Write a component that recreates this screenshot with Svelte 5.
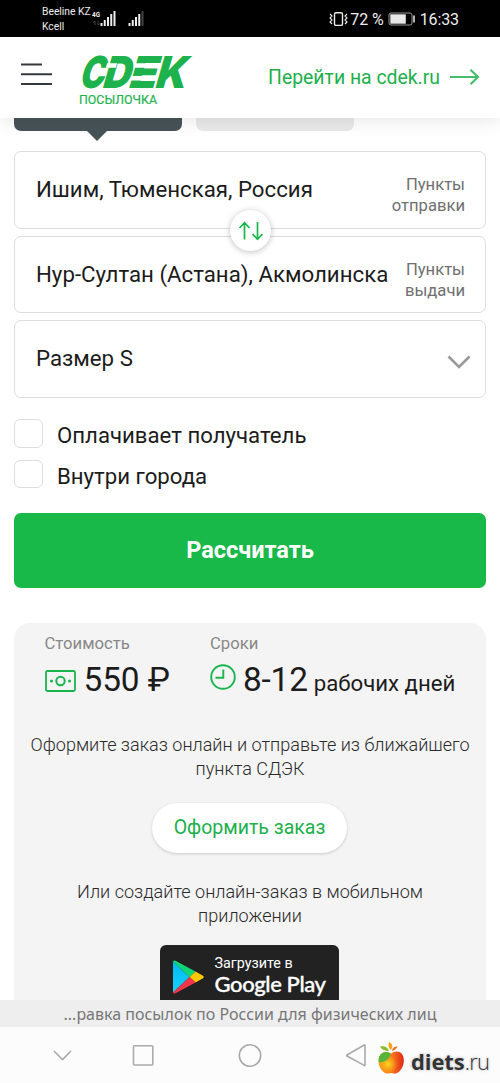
<script>
  let payer = $state(false);
  let inCity = $state(false);
  const bars = [3, 6, 9, 12, 15];
</script>

<div class="screen">
  <div class="status">
    <div class="carriers"><span>Beeline KZ</span><span>Kcell</span></div>
    <svg class="signals" width="56" height="26" viewBox="0 0 56 26">
      <text x="0" y="12" class="net" textLength="8" lengthAdjust="spacingAndGlyphs">4G</text>
      <path d="M3 20v-4l-2 1.5M6 16v4l2-1.5" stroke="#555" fill="none" stroke-width=".8" />
      {#each bars as h, i}
        <rect x={8.500 + i * 3.25} y={21 - h} width="2" height={h} fill="#eee" />
        <rect x={36.500 + i * 3.25} y={21 - h} width="2" height={h} fill={i === 4 ? '#444' : '#eee'} />
      {/each}
    </svg>
    <div class="status-right">
      <svg width="19" height="16" viewBox="0 0 19 16" fill="none" stroke="#eee">
        <rect x="5.5" y="1.8" width="8" height="12.6" rx="1.5" stroke-width="1.4" />
        <path d="M1 3l2 2-2 2 2 2-2 2 2 2M18 3l-2 2 2 2-2 2 2 2-2 2" stroke-width="1.1" />
      </svg>
      <span class="pct">72 %</span>
      <svg class="battery" width="28" height="14" viewBox="0 0 28 14">
        <rect x="1" y="1" width="23" height="12" rx="2" fill="none" stroke="#999" />
        <rect x="2.3" y="2.3" width="15.5" height="9.4" fill="#e8e8e8" />
        <path d="M26 3.5v7" stroke="#ddd" stroke-width="1.6" />
      </svg>
      <span class="clock">16:33</span>
    </div>
  </div>

  <header>
    <svg class="burger" width="31" height="24" viewBox="0 0 31 24" stroke="#343a40" stroke-width="2">
      <path d="M0 2.5h21M0 12.3h31M0 22h31" />
    </svg>
    <div class="brand">
      <svg width="114" height="34" viewBox="0 0 114 34">
        <g transform="translate(0 33) skewX(-16)">
          <text class="logo" x="-1" y="0" textLength="25" lengthAdjust="spacingAndGlyphs">C</text>
          <text class="logo" x="22" y="0" textLength="28" lengthAdjust="spacingAndGlyphs">D</text>
          <text class="logo" x="48" y="0" textLength="28" lengthAdjust="spacingAndGlyphs">E</text>
          <text class="logo" x="74.500" y="0" textLength="31" lengthAdjust="spacingAndGlyphs">K</text>
          <path d="M49.500 -24.800h24v4.500h-24zM49.500 -12h24v4.500h-24zM21 -24.800h10v4.500h-10z" fill="#fff" />
        </g>
      </svg>
      <span>ПОСЫЛОЧКА</span>
    </div>
    <a href="#site">Перейти на cdek.ru
      <svg width="30" height="18" viewBox="0 0 30 18" fill="none" stroke="#45bd6c" stroke-width="2.2">
        <path d="M0 9h28M20.5 1.8L28 9l-7.500 7.200" />
      </svg>
    </a>
  </header>

  <main>
    <div class="tabs"><div class="tab on"></div><div class="tab"></div></div>

    <div class="fields">
      <div class="field"><span class="value">Ишим, Тюменская, Россия</span><span class="hint">Пункты<br />отправки</span></div>
      <div class="field"><span class="value">Нур-Султан (Астана), Акмолинска</span><span class="hint">Пункты<br />выдачи</span></div>
      <div class="field">
        <span class="value">Размер S</span>
        <svg class="chev" width="24" height="14" viewBox="0 0 24 14" fill="none" stroke="#999" stroke-width="2.6"><path d="M1.500 1.500L12 12 22.500 1.500" /></svg>
      </div>
      <button class="swap" aria-label="swap">
        <svg width="28" height="20" viewBox="0 0 28 20" fill="none" stroke="#16b64c" stroke-width="1.700">
          <path d="M7.500 18.500V2M2.500 7l5-5.300 5 5.300M20.500 1v17M15.500 13l5 5.300 5-5.300" />
        </svg>
      </button>
    </div>

    <div class="checks">
      <label><input type="checkbox" bind:checked={payer} /><span>Оплачивает получатель</span></label>
      <label><input type="checkbox" bind:checked={inCity} /><span>Внутри города</span></label>
    </div>

    <button class="calc"><span>Рассчитать</span></button>

    <section>
      <div class="summary">
        <div class="col cost">
          <span class="label">Стоимость</span>
          <div class="figure">
            <svg width="31" height="22" viewBox="0 0 31 22" fill="none" stroke="#19b64e" stroke-width="1.800">
              <rect x="1" y="1" width="29" height="20" rx="1.500" /><circle cx="15.500" cy="11" r="4.200" stroke-width="2" />
              <g fill="#19b64e" stroke="none"><circle cx="6.500" cy="11" r="1.500" /><circle cx="24.500" cy="11" r="1.500" /></g>
            </svg>
            <b>550 ₽</b>
          </div>
        </div>
        <div class="col">
          <span class="label">Сроки</span>
          <div class="figure">
            <svg class="time" width="26" height="26" viewBox="0 0 26 26" fill="none" stroke="#19b64e" stroke-width="1.900">
              <circle cx="13" cy="13" r="11.800" /><path d="M13.300 5.500v8.300H5.500" />
            </svg>
            <b class="days">8-12</b><span class="unit">рабочих дней</span>
          </div>
        </div>
      </div>
      <p><span>Оформите заказ онлайн и отправьте из ближайшего</span><br /><span>пункта СДЭК</span></p>
      <button class="order"><span>Оформить заказ</span></button>
      <p class="p2"><span>Или создайте онлайн-заказ в мобильном</span><br /><span>приложении</span></p>
      <div class="play">
        <svg width="31" height="34" viewBox="0 0 31 34">
          <defs><linearGradient id="blue" x1="0" y1="0" x2="0" y2="1"><stop stop-color="#00b8f0" /><stop offset="1" stop-color="#19d3ff" /></linearGradient></defs>
          <path d="M0 1.500V32.500L16.500 17z" fill="url(#blue)" />
          <path d="M0 1.500Q.5-.3 2.500.8L22.500 11.500 16.500 17z" fill="#10d67a" />
          <path d="M22.500 11.500L30 15.800q1.500 1.200 0 2.400L22.500 22.500 16.500 17z" fill="#ffc800" />
          <path d="M0 32.500Q.5 34.300 2.500 33.200L22.500 22.500 16.500 17z" fill="#f4364c" />
        </svg>
        <div class="playtext"><span class="get">Загрузите в</span><span class="gp">Google Play</span></div>
      </div>
    </section>
  </main>

  <div class="caption"><span>...равка посылок по России для физических лиц</span></div>

  <nav>
    <svg width="500" height="56" viewBox="0 0 500 56" fill="none" stroke="#aaa" stroke-width="1.600">
      <path d="M54 24l8.500 8.500L71 24" />
      <rect x="133.500" y="18.700" width="19.300" height="19.300" rx="1" />
      <circle cx="250" cy="28.500" r="10.700" />
      <path d="M365 18.500v19.500q0 .8-.8.400L347 29q-.8-.5 0-1L364.200 18q.8-.4.800.5z" />
    </svg>
    <div class="mark">
      <svg width="27" height="33" viewBox="0 0 27 33">
        <defs>
          <linearGradient id="skin"><stop stop-color="#f99b12" /><stop offset=".5" stop-color="#f8801c" /><stop offset="1" stop-color="#df2718" /></linearGradient>
          <radialGradient id="glow"><stop stop-color="#ffd91f" /><stop offset="1" stop-color="#fbb416" stop-opacity="0" /></radialGradient>
        </defs>
        <path d="M13 11.500c3-2.500 8-3 11 .5 4 6 1 15-4 18.500-3 1.800-5 1-7 .6-2 .6-5 1.200-8-1.600C0 25 -1 16 3 12c3-3 7-2.500 10-.5z" fill="url(#skin)" />
        <ellipse cx="10" cy="22" rx="9.500" ry="9" fill="url(#glow)" />
        <path d="M.8 20C0 11 7 8 12.500 11.500c-1 6-6 9.500-11.700 8.500z" fill="#55b53b" />
        <path d="M11 9C7 9 3.500 7.500 2 4.500 6 3.500 10 5 11 9z" fill="#83bd2b" />
        <path d="M12.500 8C10 5 10 2 11.500 0c3 2 4 5 1 8z" fill="#f9a51c" />
        <path d="M14 9c0-2.500 2-4.500 5.500-4.500C18.500 7 17 8 14 9z" fill="#ed762b" />
      </svg>
      <div class="site"><b>diets</b><span>.ru</span></div>
    </div>
  </nav>
</div>

<style>
  :global(body) { background: #fff; overflow: hidden; }
  .screen { width: 500px; height: 1083px; display: flex; flex-direction: column; overflow: hidden; font-family: Roboto, "Liberation Sans", sans-serif; color: #1c1c1c; background: #fff; }
  button { font: inherit; border: 0; padding: 0; }
  span, a, b { white-space: nowrap; }
  .status { box-sizing: border-box; height: 37px; flex: none; background: #000; color: #eee; display: flex; padding: 0 41px 0 42px; }
  .carriers { display: flex; flex-direction: column; width: 50px; font-size: 10.300px; line-height: 15px; padding-top: 4px; }
  .signals { margin-top: 5px; }
  .net { font: 700 8px Roboto; fill: #eee; }
  .status-right { margin-left: auto; display: flex; align-items: center; font-size: 16px; height: 38px; letter-spacing: -.1px; }
  .pct { margin: 0 4px 0 2px; }
  .clock { margin-left: 4px; }

  header { position: relative; z-index: 2; box-sizing: border-box; height: 81px; flex: none; display: flex; background: #fff; padding: 0 20px 0 21px; box-shadow: 0 2px 18px rgba(0, 0, 0, .1); }
  .burger { margin-top: 25px; }
  .brand { margin: 18px 0 0 27px; width: 114px; color: #1eb24c; display: flex; flex-direction: column; }
  .brand svg { overflow: visible; flex: none; }
  .logo { font: 900 44px Inter; fill: #1eb24c; }
  .brand span { font-size: 12.400px; line-height: 15px; margin-top: 3px; -webkit-text-stroke: .2px; }
  header a { display: flex; gap: 10px; align-items: center; margin-left: auto; height: 80px; color: #20b04c; text-decoration: none; font-size: 19.400px; }

  main { height: 882px; flex: none; overflow: hidden; padding: 0 14px; }
  .tabs { display: flex; gap: 14px; height: 13px; margin-bottom: 20px; }
  .tab { width: 158.500px; border-radius: 0 0 7px 7px; background: #e9e9e9; }
  .tab.on { position: relative; width: 167.500px; background: #485358; }
  .tab.on::after { content: ""; position: absolute; left: 73px; top: 13px; border: 10.500px solid transparent; border-top-color: #485358; border-bottom: 0; }
  .fields { position: relative; display: flex; flex-direction: column; gap: 7px; }
  .field { box-sizing: border-box; height: 77.700px; border: 1.500px solid #ddd; border-radius: 7px; display: flex; align-items: center; justify-content: space-between; padding: 0 20px 0 21px; }
  .value { font-size: 22.250px; line-height: 30px; margin-bottom: 2px; }
  .hint { font-size: 16.600px; line-height: 21px; color: #707070; text-align: right; margin-top: 10px; }
  .chev { margin: 6px -6px 0 0; }
  .swap { position: absolute; left: 216px; top: 59px; width: 41px; height: 41px; border-radius: 50%; background: #fff; box-shadow: 0 1px 6px rgba(0, 0, 0, .25); display: flex; align-items: center; justify-content: center; }
  .checks { display: flex; flex-direction: column; gap: 12px; margin-top: 21px; }
  .checks label { display: flex; gap: 14px; height: 28.500px; font-size: 22.200px; line-height: 32.500px; }
  input { appearance: none; box-sizing: border-box; width: 29px; height: 28.500px; margin: 0; border: 1.500px solid #ddd; border-radius: 6px; }
  .calc { display: block; width: 472px; height: 75px; margin-top: 25px; padding-bottom: 2px; border-radius: 7px; background: #18b849; color: #fff; font-weight: 700; font-size: 23.500px; }
  section { box-sizing: border-box; width: 472px; height: 400px; margin-top: 35px; border-radius: 16px; background: #f4f4f4; display: flex; flex-direction: column; align-items: center; padding-top: 11px; }
  .summary { align-self: stretch; display: flex; padding-left: 30.500px; height: 87px; }
  .cost { width: 165.500px; }
  .label { display: block; font-size: 16.700px; line-height: 20px; color: #888; }
  .figure { display: flex; align-items: baseline; height: 44px; margin-top: 4px; }
  .figure svg { align-self: flex-start; margin-top: 12px; }
  .figure svg.time { margin-top: 6px; }
  .figure b { font-weight: 400; font-size: 33.400px; line-height: 43px; margin-left: 8px; letter-spacing: -.1px; }
  .figure .days { margin-left: 7px; letter-spacing: -.2px; }
  .unit { font-size: 22.200px; margin-left: 6px; }
  p { margin: 12px 0 0; text-align: center; font-weight: 300; font-size: 18.060px; line-height: 24px; color: #2a2a2a; }
  .order { width: 195px; height: 50px; margin: 22px 1px 0 0; padding-bottom: 2px; border-radius: 25px; background: #fff; color: #20b04c; font-size: 19.500px; box-shadow: 0 1px 3px rgba(0, 0, 0, .18); }
  .p2 { margin-top: 27px; }
  .play { box-sizing: border-box; width: 179px; height: 70px; margin: 17px 2px 0 0; flex: none; background: #222; border-radius: 6px; color: #fff; display: flex; padding: 15px 0 0 13px; gap: 11px; }
  .playtext { display: flex; flex-direction: column; margin-top: -7px; }
  .get { font-size: 14.300px; line-height: 21px; }
  .gp { font: 500 22px/19px Lato; letter-spacing: -.4px; -webkit-text-stroke: .35px; }
  .caption { height: 27px; flex: none; background: #eee; color: #777; font: 16px/28px "Noto Sans", sans-serif; text-align: center; }
  nav { position: relative; height: 56px; background: #fcfcfc; }
  .mark { position: absolute; left: 378px; top: 15px; display: flex; gap: 6px; }
  .site { margin-top: 3px; font: 22px/32px "Open Sans"; color: #333; text-shadow: 0 0 2px #fff, 0 0 3px #999; }
  .site b { font-weight: 700; letter-spacing: -.1px; }
  .site span { letter-spacing: -.7px; font-weight: 300; }
</style>
